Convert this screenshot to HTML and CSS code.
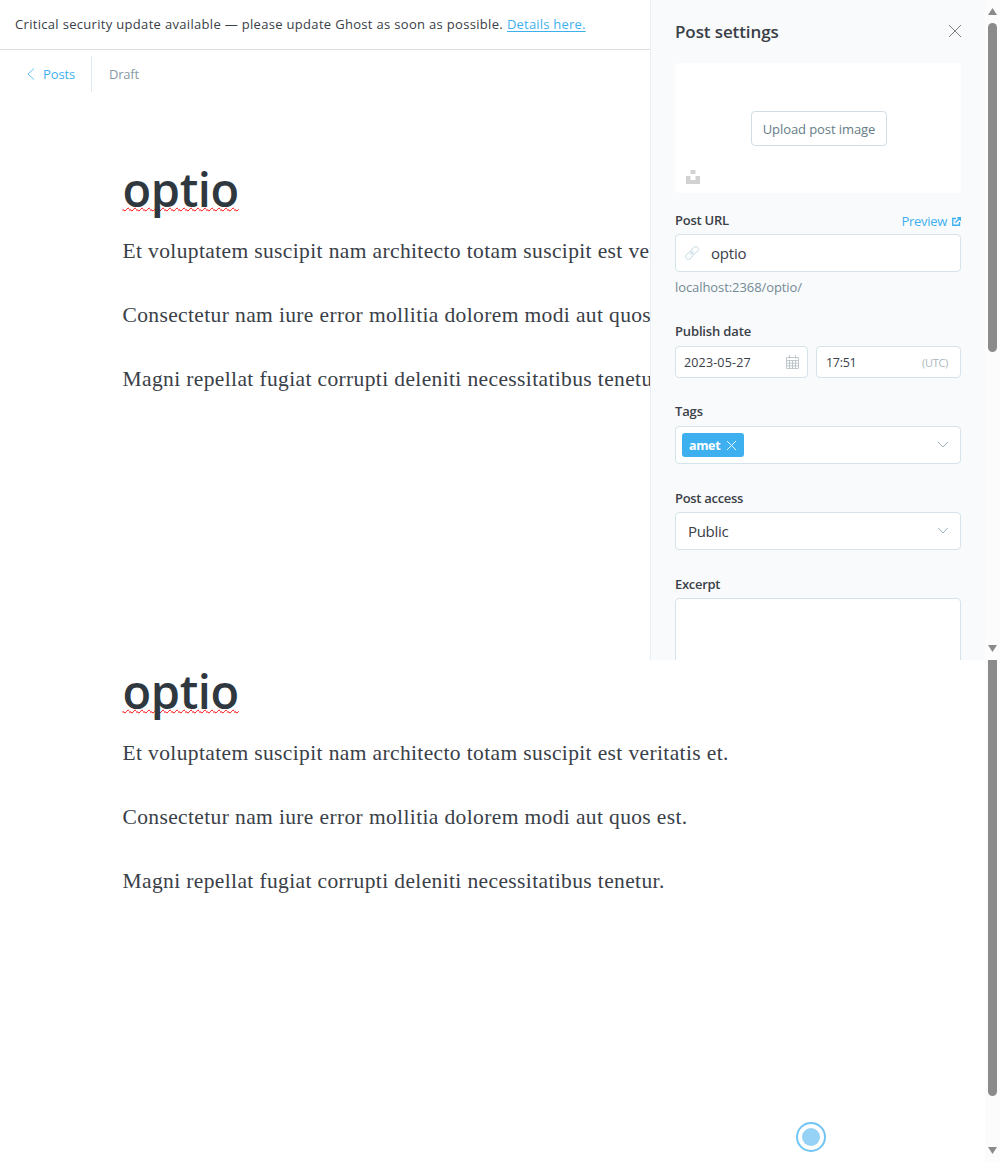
FILE: index.html
```
<!DOCTYPE html>
<html lang="en">
<head>
<meta charset="utf-8">
<title>Post editor</title>
<link rel="stylesheet" href="styles.css">
</head>
<body>
<div class="screen screen-top">
  <main class="editor">
    <div class="alert"><span class="alert-text">Critical security update available — please update Ghost as soon as possible.</span><a class="alert-link">Details here.</a></div>
    <header class="toolbar">
      <a class="back"><svg width="8" height="14" viewBox="0 0 8 14"><path d="M7 1.5 1 7l6 5.5"/></svg><span>Posts</span></a>
      <span class="status">Draft</span>
    </header>
    <article class="post">
      <h1 class="title"><span>optio</span></h1>
      <p><span>Et voluptatem suscipit nam architecto totam suscipit est veritatis et.</span></p>
      <p><span>Consectetur nam iure error mollitia dolorem modi aut quos est.</span></p>
      <p><span>Magni repellat fugiat corrupti deleniti necessitatibus tenetur.</span></p>
    </article>
  </main>
  <aside class="settings">
    <div class="settings-head"><h2>Post settings</h2><svg class="close" width="14" height="14" viewBox="0 0 14 14"><path d="M1 1l12 12M13 1 1 13"/></svg></div>
    <div class="uploader">
      <button class="upload"><span>Upload post image</span></button>
      <svg class="unsplash" width="14" height="14" viewBox="0 0 14 14"><path d="M4.5 0h5v4h-5zM0 6h4.5v4h5V6H14v8H0z"/></svg>
    </div>
    <div class="label-row"><label class="l-url">Post URL</label><a class="preview"><span>Preview</span><svg width="9" height="9" viewBox="0 0 9 9"><path d="M4 1.5H.8v6.7h6.7V5M3.3 5.5 8 1M5.3.7h3v3"/></svg></a></div>
    <div class="field"><svg class="link" width="14" height="14" viewBox="0 0 14 14"><g transform="rotate(-45 7 7)"><rect x="-.8" y="4.4" width="8.4" height="5.2" rx="2.6"/><rect x="6.4" y="4.4" width="8.4" height="5.2" rx="2.6"/><path d="M4.5 7h5"/></g></svg><span class="slug">optio</span></div>
    <div class="hint"><span>localhost:2368/optio/</span></div>
    <div class="label-date"><label class="l-date">Publish date</label></div>
    <div class="dates">
      <div class="date"><span>2023-05-27</span><svg width="13" height="14" viewBox="0 0 13 14"><path d="M.5 2.5h12v11H.5zM.5 5.5h12M3.5 5.5v8M6.5 5.5v8M9.5 5.5v8M.5 8.2h12M.5 10.8h12M3.5 0v3.5M9.5 0v3.5"/></svg></div>
      <div class="time"><span>17:51</span><span class="utc">(UTC)</span></div>
    </div>
    <div class="label-tags"><label class="l-tags">Tags</label></div>
    <div class="field tags"><span class="tag"><b>amet</b><svg width="9" height="9" viewBox="0 0 9 9"><path d="M0 0l9 9M9 0 0 9"/></svg></span><svg class="chev" width="12" height="7" viewBox="0 0 12 7"><path d="M1 1l5 5 5-5"/></svg></div>
    <div class="label-access"><label class="l-access">Post access</label></div>
    <div class="field access"><span class="public">Public</span><svg class="chev" width="12" height="7" viewBox="0 0 12 7"><path d="M1.3 1 6 6l4.7-5"/></svg></div>
    <div class="label-excerpt"><label class="l-excerpt">Excerpt</label></div>
    <div class="textarea"></div>
  </aside>
  <div class="scrollbar"><i class="up"></i><i class="thumb thumb-top"></i><i class="down"></i></div>
</div>
<div class="screen screen-bottom">
  <article class="post">
    <h1 class="title"><span>optio</span></h1>
    <p><span>Et voluptatem suscipit nam architecto totam suscipit est veritatis et.</span></p>
    <p><span>Consectetur nam iure error mollitia dolorem modi aut quos est.</span></p>
    <p><span>Magni repellat fugiat corrupti deleniti necessitatibus tenetur.</span></p>
  </article>
  <div class="scrollbar"><i class="thumb thumb-bottom"></i><i class="down"></i></div>
  <svg class="pulse" width="30" height="30" viewBox="0 0 30 30"><circle class="ring" cx="15" cy="15" r="14"/><circle class="dot" cx="15" cy="15" r="9"/></svg>
</div>
</body>
</html>
```

FILE: styles.css
```
* { box-sizing: border-box; }
body { margin: 0; width: 1000px; background: #fff; color: #394047; font: 13px/20px "Open Sans", "Noto Sans", sans-serif; }
h1, h2, p { margin: 0; }
span, label, a, h2, b { white-space: nowrap; }
svg { display: block; flex: none; fill: none; stroke: currentColor; }
.screen { display: flex; overflow: hidden; }
.screen-top { height: 660px; }
.screen-bottom { height: 502px; position: relative; }
.editor { width: 650px; flex: none; overflow: hidden; }
.alert { height: 50px; border-bottom: 1px solid #dadcde; padding: 14px 15px 0; display: flex; gap: 4px; }
.alert-text { letter-spacing: .315px; }
.alert-link { color: #3eb0ef; text-decoration: underline; text-underline-offset: 2px; letter-spacing: .2px; }
.toolbar { height: 50px; padding-bottom: 2px; display: flex; align-items: center; color: #7c8b9a; }
.back { display: flex; align-items: center; gap: 8px; height: 36px; width: 92px; padding-left: 27px; border-right: 1px solid #dfe9f1; color: #3eb0ef; letter-spacing: -.1px; }
.back svg { stroke-width: .8; }
.status { margin-left: 17px; color: #8799a6; letter-spacing: -.2px; }
.post { padding: 59px 0 0 122.5px; width: 985px; flex: none; }
.screen-bottom .post { padding-top: 1px; }
.title { font-size: 47px; line-height: 60px; font-weight: 600; color: #2f383e; height: 64px; letter-spacing: -.4px; }
.title span { text-decoration: underline wavy #f00 1px; text-decoration-skip-ink: none; text-underline-offset: 0; }
.post p { font: 21.5px/32px "Liberation Serif", serif; letter-spacing: .37px; margin-bottom: 32px; color: #394047; }
.post .title + p { margin-top: 12px; }

.settings { width: 335px; flex: none; background: #f9fafc; border-left: 1px solid #e3eef7; padding: 0 24px; height: 660px; overflow: hidden; }
.settings-head { height: 63px; display: flex; justify-content: space-between; }
h2 { font-size: 17px; line-height: 24px; font-weight: 600; margin-top: 20px; letter-spacing: -.1px; }
.close { margin-top: 24px; margin-right: -1px; stroke: #6d757b; stroke-width: .9; }
.uploader { width: 286px; height: 130px; background: #fff; border-radius: 4px; display: flex; flex-direction: column; align-items: center; padding-top: 48px; }
.upload { margin-left: 2px; width: 136px; height: 35px; border: 1px solid #d2dee4; border-radius: 4px; background: #fff; font: inherit; color: #667c86; padding: 0; letter-spacing: -.08px; }
.unsplash { align-self: flex-start; margin: 24px 0 0 11px; fill: #d2d2d2; stroke: none; }
label { font-weight: 600; letter-spacing: -.15px; }
.l-url { letter-spacing: -.25px; }
.l-access { letter-spacing: -.3px; }
.l-excerpt { letter-spacing: -.3px; }
.label-row { height: 41px; padding-top: 17px; display: flex; justify-content: space-between; }
.preview { color: #3eb0ef; display: flex; align-items: center; gap: 5px; margin: 1px 0 0; height: 20px; letter-spacing: -.3px; }
.preview svg { stroke-width: 1.4; }
.field { width: 286px; height: 38px; border: 1px solid #d5e3eb; border-radius: 4px; background: #fff; display: flex; align-items: center; }
.link { margin-left: 9px; color: #d5e3eb; stroke-width: 1.1; }
.slug, .public { font-size: 15px; letter-spacing: -.3px; }
.slug { margin-left: 12px; letter-spacing: -.2px; }
.hint { height: 50px; padding-top: 5px; color: #738a94; letter-spacing: -.08px; }
.label-date { height: 24px; margin-top: -1px; }
.dates { display: flex; gap: 8px; height: 32px; margin-top: 1px; font-size: 12.5px; }
.date, .time { border: 1px solid #d5e3eb; border-radius: 4px; background: #fff; display: flex; justify-content: space-between; align-items: center; padding-top: 1px; }
.date { width: 133px; padding-left: 8px; padding-right: 8px; letter-spacing: .15px; }
.date svg { color: #b3bcc2; stroke-width: .8; margin-top: -1px; }
.time { width: 145px; padding-left: 9px; padding-right: 12px; letter-spacing: -.3px; }
.utc { color: #aab7be; font-size: 11px; }
.label-tags { height: 48px; padding-top: 23px; }
.tags { padding-left: 6px; justify-content: space-between; }
.tag { width: 62px; height: 24px; background: #3eb0ef; color: #fff; border-radius: 3px; display: flex; align-items: center; gap: 7px; padding-left: 7px; }
.tag b { font-size: 12.5px; letter-spacing: -.35px; padding-top: 1px; }
.tag svg { stroke-width: .9; }
.chev { color: #9fb3be; margin: 0 11px 1px 0; }
.label-access { height: 48px; padding-top: 24px; }
.access { padding-left: 12px; justify-content: space-between; }
.label-excerpt { height: 48px; padding-top: 24px; }
.textarea { width: 286px; height: 90px; border: 1px solid #d5e3eb; border-radius: 4px; background: #fff; }

.scrollbar { width: 15px; flex: none; height: 100%; background: #fcfcfc; display: flex; flex-direction: column; align-items: center; }
.up, .down { width: 9px; height: 7px; background: #8b8b8b; }
.up { clip-path: polygon(50% 0, 100% 100%, 0 100%); margin-top: 8px; }
.down { clip-path: polygon(0 0, 100% 0, 50% 100%); margin-top: auto; margin-bottom: 8px; }
.thumb { width: 9px; background: #8b8b8b; border-radius: 5px; }
.thumb-top { height: 329px; margin-top: 8px; }
.thumb-bottom { height: 436px; border-radius: 0 0 5px 5px; }
.pulse { position: absolute; left: 796px; top: 462px; }
.ring { fill: #fff; stroke: #70c5f3; stroke-width: 2; }
.dot { fill: #96d2f5; stroke: none; }
```
